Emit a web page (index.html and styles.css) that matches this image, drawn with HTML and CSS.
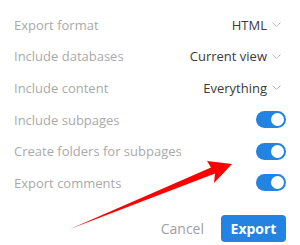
FILE: index.html
```html
<!DOCTYPE html>
<html lang="en">
<head>
  <meta charset="UTF-8">
  <title>Export</title>
  <link rel="stylesheet" href="styles.css">
</head>
<body>
  <div class="panel">
    <div class="row">
      <span class="label">Export format</span>
      <span class="value">HTML <svg class="chev" width="9" height="5" viewBox="0 0 9 5"><polyline points="0.5,0.5 4.5,4.5 8.5,0.5"/></svg></span>
    </div>
    <div class="row">
      <span class="label">Include databases</span>
      <span class="value">Current view <svg class="chev" width="9" height="5" viewBox="0 0 9 5"><polyline points="0.5,0.5 4.5,4.5 8.5,0.5"/></svg></span>
    </div>
    <div class="row">
      <span class="label">Include content</span>
      <span class="value">Everything <svg class="chev" width="9" height="5" viewBox="0 0 9 5"><polyline points="0.5,0.5 4.5,4.5 8.5,0.5"/></svg></span>
    </div>
    <div class="row">
      <span class="label">Include subpages</span>
      <span class="toggle"><span class="knob"></span></span>
    </div>
    <div class="row">
      <span class="label">Create folders for subpages</span>
      <span class="toggle"><span class="knob"></span></span>
    </div>
    <div class="row">
      <span class="label">Export comments</span>
      <span class="toggle"><span class="knob"></span></span>
    </div>
    <div class="actions">
      <button class="cancel">Cancel</button>
      <button class="export">Export</button>
    </div>
  </div>
  <!-- annotation arrow -->
  <svg class="arrow" width="300" height="245" viewBox="0 0 300 245">
    <polygon points="70,229 211,167.5 207,161 232,164 214,183 215,173.5" fill="#ff0000"/>
  </svg>
</body>
</html>
```

FILE: styles.css
```css
body { margin: 0; background: #fff; font-family: "Open Sans", sans-serif; font-size: 13px; }
.panel { padding: 9px 14px 0 14px; }
.row { display: flex; justify-content: space-between; align-items: center; height: 31.6px; }
.label { color: #aaaaaa; }
.value { color: #3a3a3a; display: flex; align-items: center; gap: 5px; padding-right: 5px; font-size: 13px; }
.chev { fill: none; stroke: #b8b8b8; stroke-width: 1; }
.toggle { width: 30px; height: 17px; border-radius: 9px; background: #2383e2; display: flex; align-items: center; justify-content: flex-end; padding-right: 2px; box-sizing: border-box; }
.knob { width: 13px; height: 13px; border-radius: 50%; background: #fff; }
.actions { display: flex; justify-content: flex-end; align-items: center; gap: 17px; margin-top: 16px; }
.actions button { font-family: inherit; font-size: 14px; border: none; cursor: pointer; }
.cancel { background: none; color: #a0a0a0; padding: 0; }
.export { background: #2383e2; color: #fff; font-weight: 700; border-radius: 4px; width: 65px; height: 27px; }
.arrow { position: absolute; top: 0; left: 0; pointer-events: none; }
```
